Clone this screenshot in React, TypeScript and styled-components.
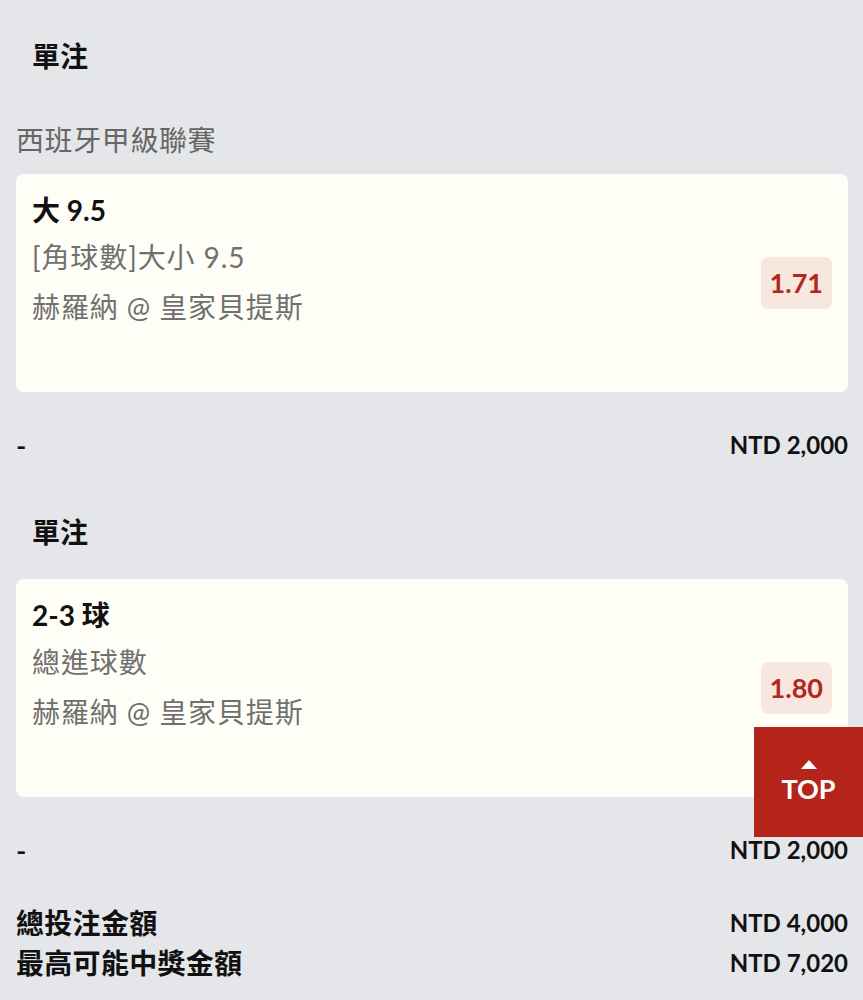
import styled, { createGlobalStyle } from "styled-components";

const GlobalStyle = createGlobalStyle`
  html, body {
    margin: 0;
    padding: 0;
    background: #e5e6e9;
  }

  body {
    font-family: Lato, "Noto Sans CJK TC", sans-serif;
    color: #111;
  }
`;

const Page = styled.div`
  padding: 36px 15px 16px 16px;
  min-height: 1000px;
  box-sizing: border-box;
`;

const BetType = styled.div<{ $first?: boolean }>`
  margin-top: ${(p) => (p.$first ? "0" : "47px")};
  padding-left: 16px;
  font-size: 28px;
  font-weight: 700;
  line-height: 40px;
`;

const League = styled.div`
  margin-top: 44px;
  font-size: 28px;
  letter-spacing: 0.6px;
  line-height: 40px;
  color: #666;
`;

const Card = styled.div<{ $gap: number }>`
  margin-top: ${(p) => p.$gap}px;
  display: flex;
  align-items: center;
  justify-content: space-between;
  padding: 16px 16px 60px 16px;
  background: #fffef6;
  border-radius: 8px;
  position: relative;
`;

const Info = styled.div`
  display: flex;
  flex-direction: column;
`;

const Selection = styled.div`
  font-size: 28px;
  font-weight: 700;
  line-height: 40px;
  margin-bottom: 2px;
`;

const Detail = styled.div`
  font-size: 28px;
  letter-spacing: 0.9px;
  line-height: 50px;
  color: #707070;
`;

const Odds = styled.div`
  position: absolute;
  right: 16px;
  top: 50%;
  transform: translateY(-50%);
  height: 52px;
  line-height: 52px;
  padding: 0 9px;
  border-radius: 7px;
  background: #f8e7df;
  color: #b3261e;
  font-size: 27px;
  font-weight: 700;
`;

const Row = styled.div`
  margin-top: 33px;
  display: flex;
  justify-content: space-between;
  align-items: center;
  line-height: 40px;
`;

const Label = styled.span`
  font-size: 28px;
  font-weight: 600;
  letter-spacing: 0.3px;
`;

const Amount = styled.span`
  font-size: 24px;
  font-weight: 700;
`;

const Totals = styled.div`
  margin-top: 33px;

  & > div {
    margin-top: 0;
  }
`;

const TopButton = styled.button`
  position: fixed;
  right: 0;
  top: 727px;
  width: 109px;
  height: 110px;
  border: none;
  background: #b5241b;
  color: #fff;
  display: flex;
  flex-direction: column;
  align-items: center;
  justify-content: center;
  gap: 5px;
  font-family: Lato, sans-serif;
  font-size: 27px;
  font-weight: 700;
  line-height: 30px;
  cursor: pointer;
  padding: 0;
`;

type Bet = {
  league?: string;
  selection: string;
  market: string;
  match: string;
  odds: string;
  stake: string;
};

const bets: Bet[] = [
  {
    league: "西班牙甲級聯賽",
    selection: "大 9.5",
    market: "[角球數]大小 9.5",
    match: "赫羅納 @ 皇家貝提斯",
    odds: "1.71",
    stake: "NTD 2,000",
  },
  {
    selection: "2-3 球",
    market: "總進球數",
    match: "赫羅納 @ 皇家貝提斯",
    odds: "1.80",
    stake: "NTD 2,000",
  },
];

function BetBlock({ bet, first }: { bet: Bet; first: boolean }) {
  return (
    <>
      <BetType $first={first}>單注</BetType>
      {bet.league && <League>{bet.league}</League>}
      <Card $gap={bet.league ? 14 : 27}>
        <Info>
          <Selection>{bet.selection}</Selection>
          <Detail>{bet.market}</Detail>
          <Detail>{bet.match}</Detail>
        </Info>
        <Odds>{bet.odds}</Odds>
      </Card>
      <Row>
        <Label>-</Label>
        <Amount>{bet.stake}</Amount>
      </Row>
    </>
  );
}

export default function App() {
  return (
    <>
      <GlobalStyle />
      <Page>
        {bets.map((bet, i) => (
          <BetBlock key={i} bet={bet} first={i === 0} />
        ))}
        <Totals>
          <Row>
            <Label>總投注金額</Label>
            <Amount>NTD 4,000</Amount>
          </Row>
          <Row>
            <Label>最高可能中獎金額</Label>
            <Amount>NTD 7,020</Amount>
          </Row>
        </Totals>
      </Page>
      <TopButton>
        <svg width="16" height="9" viewBox="0 0 16 9">
          <polygon points="8,0 16,9 0,9" fill="#fff" />
        </svg>
        TOP
      </TopButton>
    </>
  );
}
